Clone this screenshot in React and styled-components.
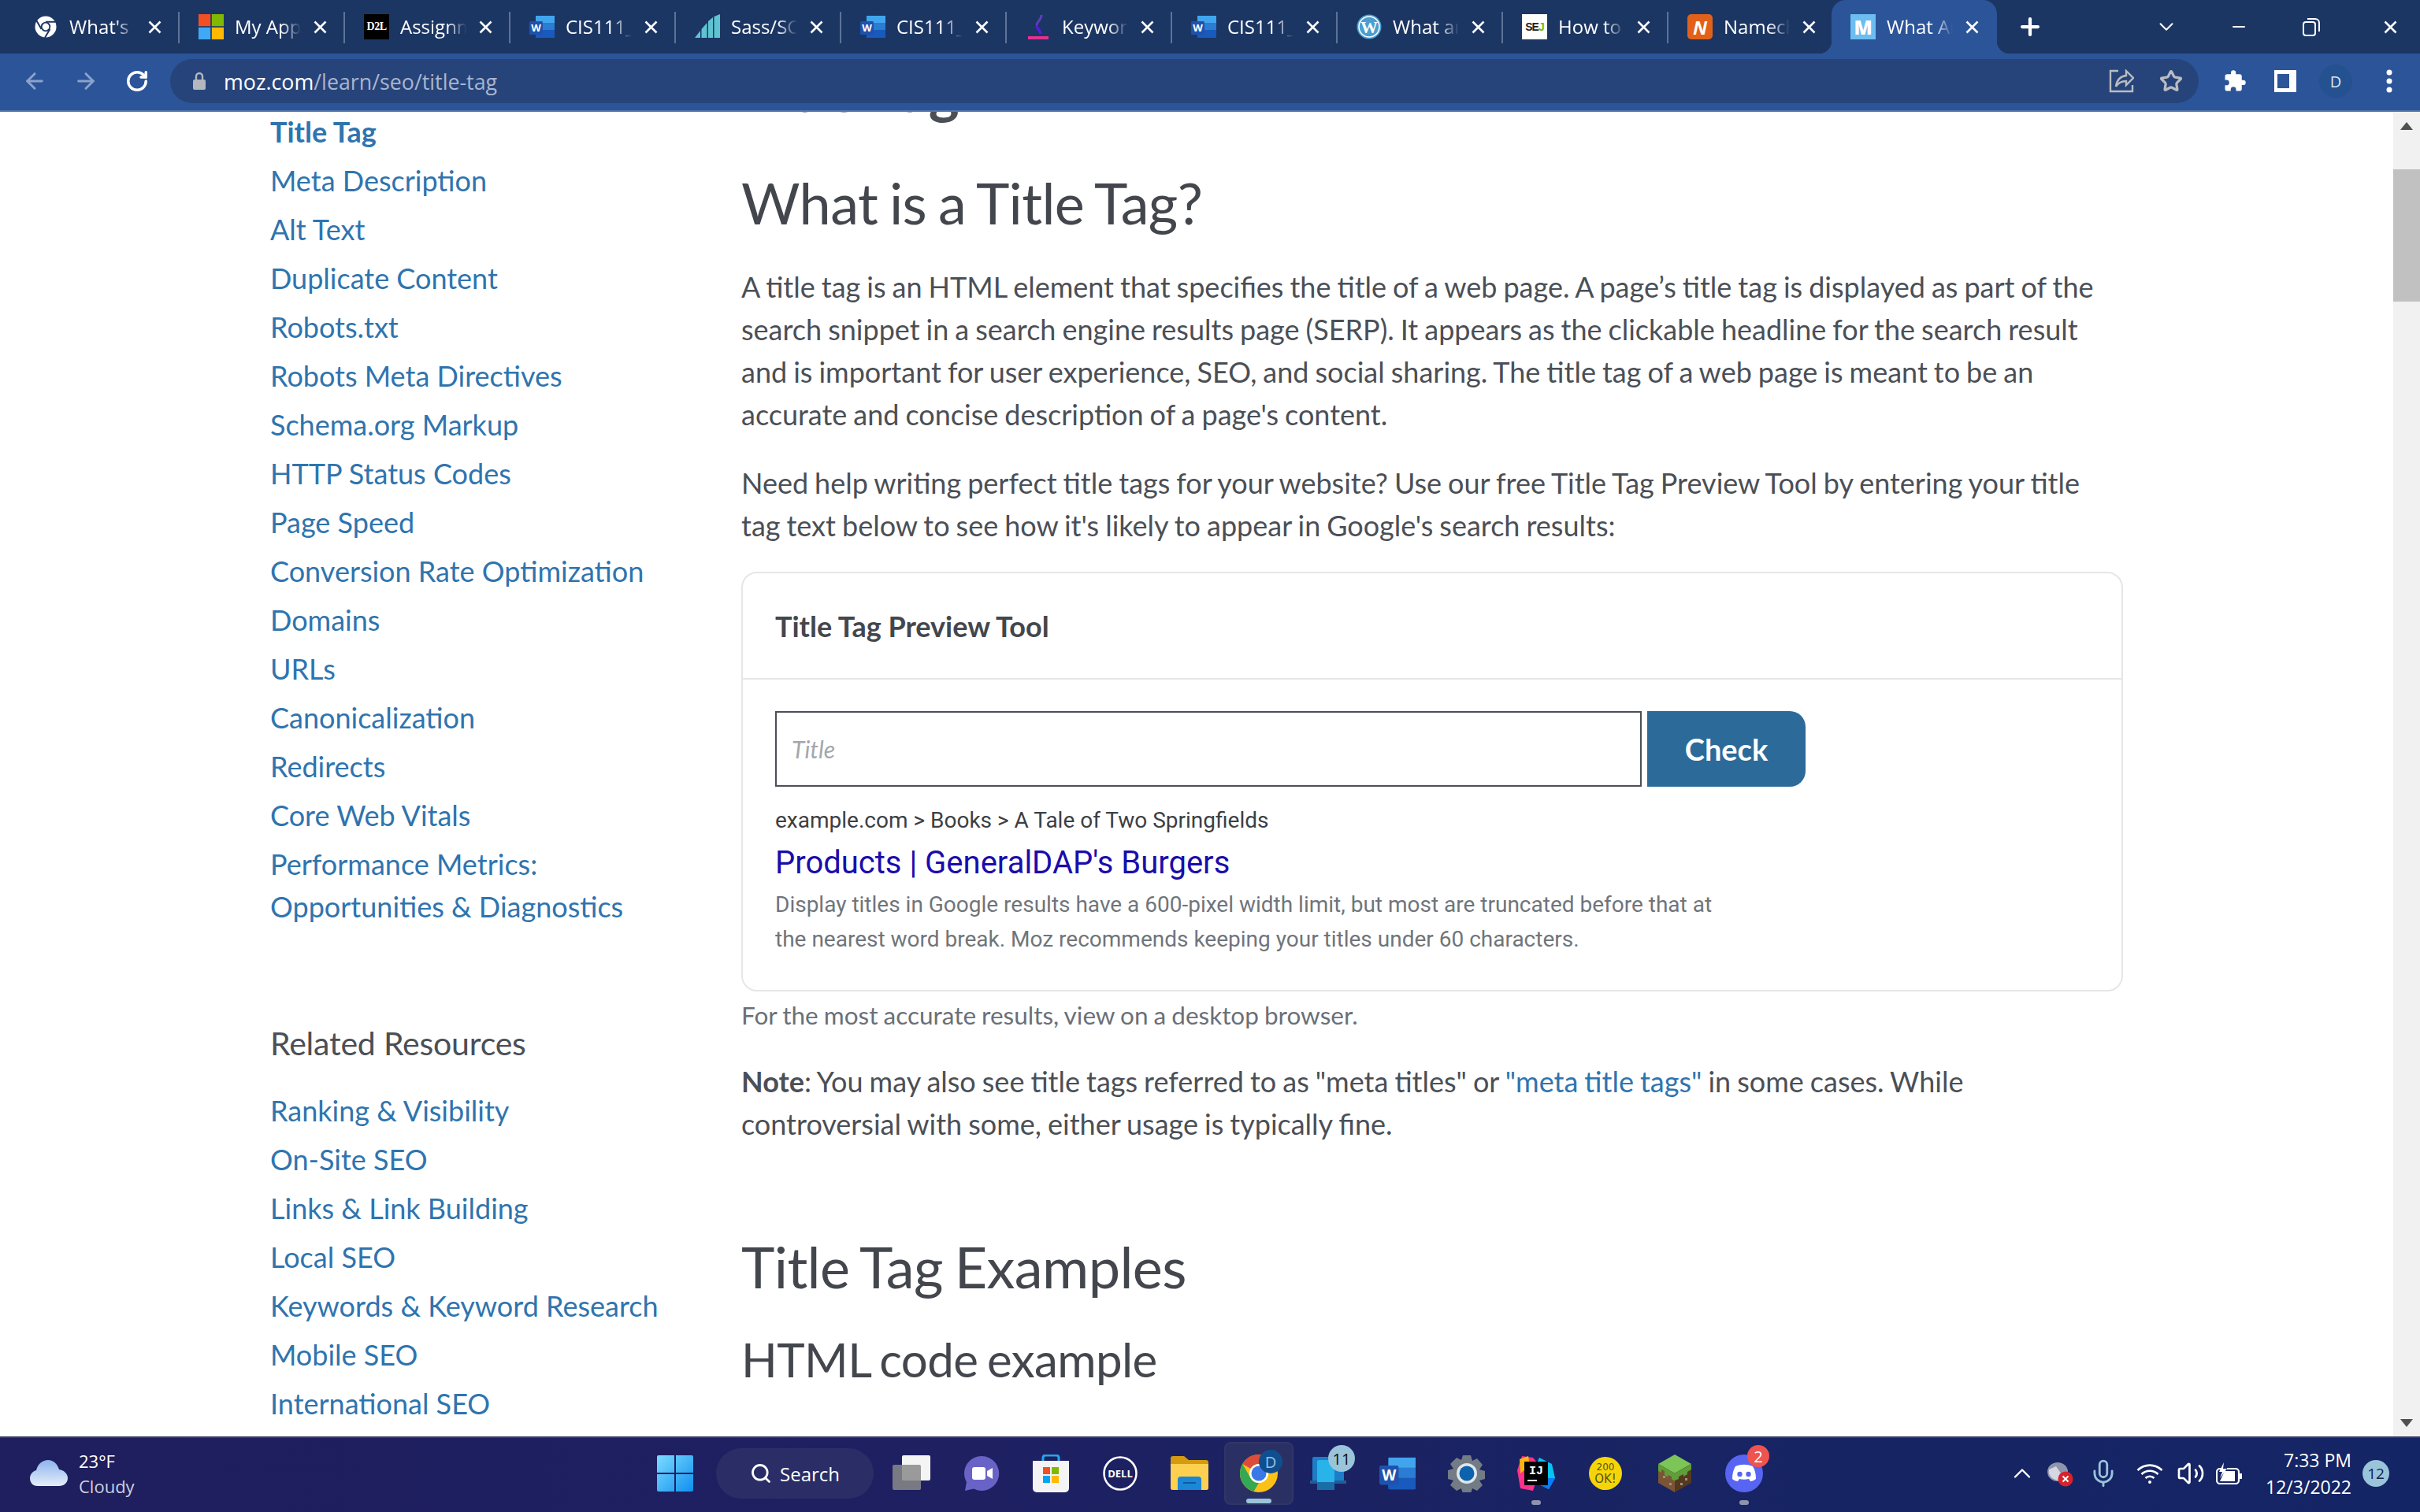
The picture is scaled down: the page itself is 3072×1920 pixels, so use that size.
import styled, { createGlobalStyle } from "styled-components";
import { ArrowLeft, ArrowRight, RotateCw, Star, Plus, ChevronDown, ChevronUp, Minus, Search, Mic, Volume2 } from "lucide-react";

const GlobalStyle = createGlobalStyle`
  html, body { margin: 0; padding: 0; background: #fff; }
  * { box-sizing: border-box; }
  body { font-family: "Lato", sans-serif; }
`;

const Page = styled.div`
  width: 3072px;
  height: 1920px;
  display: flex;
  flex-direction: column;
  overflow: hidden;
`;

/* ---------- chrome tabs ---------- */
const TabStrip = styled.div`
  height: 68px;
  flex: none;
  background: #1c3664;
  display: flex;
  padding-left: 18px;
  font-family: "Open Sans", sans-serif;
`;
const Tab = styled.div`
  position: relative;
  width: 210px;
  height: 68px;
  padding-left: 24px;
  margin-left: ${(p) => (p.$active ? "-3px" : "0")};
  display: flex;
  align-items: center;
  color: #fff;
  background: ${(p) => (p.$active ? "#2c5499" : "transparent")};
  border-radius: ${(p) => (p.$active ? "18px 18px 0 0" : "0")};
  &::after {
    content: "";
    display: ${(p) => (p.$last || p.$active ? "none" : "block")};
    position: absolute;
    right: 0;
    top: 15px;
    width: 2px;
    height: 40px;
    background: #5d7396;
  }
`;
const Flare = styled.span`
  position: absolute;
  bottom: 0;
  ${(p) => (p.$right ? "right: -16px;" : "left: -16px;")}
  width: 16px;
  height: 16px;
  background: radial-gradient(circle at ${(p) => (p.$right ? "100% 0" : "0 0")}, transparent 16px, #2c5499 16.5px);
`;
const TabIcon = styled.span`
  width: 32px;
  height: 32px;
  flex: none;
  display: flex;
  align-items: center;
  justify-content: center;
`;
const TabLabel = styled.span`
  width: 84px;
  margin-left: 14px;
  font-size: 24px;
  line-height: 32px;
  white-space: nowrap;
  overflow: hidden;
  -webkit-mask-image: linear-gradient(90deg, #000 70%, transparent 100%);
  mask-image: linear-gradient(90deg, #000 70%, transparent 100%);
`;
const CloseX = styled.svg`
  width: 17px;
  height: 17px;
  margin-left: 16px;
  flex: none;
`;
const NewTab = styled.div`
  width: 72px;
  margin-left: 6px;
  display: flex;
  align-items: center;
  justify-content: center;
  color: #fff;
`;
const WindowControls = styled.div`
  margin-left: auto;
  display: flex;
  align-items: center;
  height: 68px;
  color: #fff;
`;
const WindowButton = styled.div`
  width: 92px;
  height: 56px;
  display: flex;
  align-items: center;
  justify-content: center;
`;

/* ---------- address bar ---------- */
const Toolbar = styled.div`
  height: 74px;
  flex: none;
  background: #2c5499;
  border-bottom: 2px solid #5578aa;
  display: flex;
  align-items: center;
  padding: 0 0 2px 0;
`;
const NavButton = styled.div`
  width: 65px;
  height: 56px;
  flex: none;
  display: flex;
  align-items: center;
  justify-content: center;
  color: ${(p) => (p.$dim ? "#8ba3cb" : "#fff")};
`;
const NavGroup = styled.div`
  display: flex;
  width: 216px;
  padding-left: 11px;
  flex: none;
`;
const Omnibox = styled.div`
  width: 2575px;
  height: 56px;
  border-radius: 28px;
  background: #27447a;
  display: flex;
  align-items: center;
  padding: 0 20px 0 28px;
  flex: none;
`;
const Url = styled.div`
  margin-left: 22px;
  font-family: "Open Sans", sans-serif;
  font-size: 26.8px;
  color: #fff;
  span { color: #a9b6cf; }
`;
const OmniActions = styled.div`
  margin-left: auto;
  display: flex;
  align-items: center;
  gap: 32px;
  color: #b9bcc2;
`;
const ToolActions = styled.div`
  flex: 1;
  display: flex;
  align-items: center;
  padding-left: 31px;
  color: #fff;
`;
const Avatar = styled.div`
  width: 42px;
  height: 42px;
  margin-left: 29px;
  border-radius: 50%;
  background: #24518f;
  display: flex;
  align-items: center;
  justify-content: center;
  font: 20px "Open Sans", sans-serif;
  color: #dbe5f3;
`;
const SidePanel = styled.div`
  width: 28px;
  height: 28px;
  margin-left: 35px;
  border-style: solid;
  border-color: #fff;
  border-width: 5px 9px 5px 4px;
  background: #2c5499;
`;
const MenuGap = styled.span`
  width: 43px;
`;

/* ---------- page ---------- */
const Viewport = styled.div`
  flex: 1;
  display: flex;
  min-height: 0;
  overflow: hidden;
  background: #fff;
`;
const Sidebar = styled.nav`
  width: 941px;
  flex: none;
  padding-left: 343px;
  margin-top: -2px;
`;
const SideLink = styled.a`
  display: block;
  width: 520px;
  font-size: 36px;
  line-height: 54px;
  margin-bottom: 8px;
  color: #2f74ae;
  font-weight: ${(p) => (p.$current ? 700 : 400)};
`;
const SideHeading = styled.h3`
  margin: 119px 0 30px;
  font-size: 41px;
  line-height: 56px;
  font-weight: 400;
  letter-spacing: -0.2px;
  color: #4b4f56;
`;
const Main = styled.main`
  width: 1754px;
  flex: none;
  color: #4b4f56;
`;
const ClippedTitle = styled.h1`
  margin: -76px 0 0;
  font-size: 74px;
  line-height: 96px;
  font-weight: 700;
`;
const H2 = styled.h2`
  margin: ${(p) => p.$top}px 0 0;
  font-size: 72px;
  line-height: 86px;
  font-weight: 400;
  letter-spacing: -0.6px;
  word-spacing: -3px;
  color: #43474d;
`;
const H3 = styled.h3`
  margin: 39px 0 0;
  font-size: 60px;
  line-height: 72px;
  font-weight: 400;
  letter-spacing: -0.6px;
  word-spacing: -3px;
  color: #43474d;
`;
const Para = styled.p`
  margin: ${(p) => p.$top}px 0 0;
  font-size: 36px;
  line-height: 54px;
  word-spacing: -1.2px;
  a { color: #2f74ae; }
  b { font-weight: 700; }
`;
const Card = styled.section`
  margin-top: 32px;
  height: 533px;
  border: 2px solid #e6e6e6;
  border-radius: 20px;
`;
const CardHead = styled.div`
  height: 135px;
  padding-left: 41px;
  display: flex;
  align-items: center;
  border-bottom: 2px solid #e6e6e6;
  font-size: 36px;
  font-weight: 700;
  color: #43474d;
`;
const CardBody = styled.div`
  padding: 40px 41px 0;
`;
const InputRow = styled.div`
  display: flex;
  gap: 7px;
`;
const TitleInput = styled.div`
  width: 1100px;
  height: 96px;
  border: 2px solid #4b4f56;
  padding-left: 19px;
  display: flex;
  align-items: center;
  font-size: 30px;
  font-style: italic;
  color: #a3a7ab;
`;
const CheckButton = styled.div`
  width: 201px;
  height: 96px;
  background: #2b6a99;
  border-radius: 0 20px 20px 0;
  display: flex;
  align-items: center;
  justify-content: center;
  color: #fff;
  font-size: 38px;
  font-weight: 700;
`;
const Crumb = styled.div`
  margin-top: 21px;
  font-family: "Roboto", sans-serif;
  font-size: 28px;
  line-height: 44px;
  color: #3c4043;
`;
const PreviewTitle = styled.div`
  margin-top: 6px;
  font-family: "Roboto", sans-serif;
  font-size: 40px;
  line-height: 52px;
  color: #1a0dab;
`;
const PreviewText = styled.div`
  margin-top: 5px;
  width: 1220px;
  font-family: "Roboto", sans-serif;
  font-size: 28px;
  line-height: 44px;
  color: #70757a;
`;
const Caption = styled.div`
  margin-top: 8px;
  font-size: 31.5px;
  line-height: 44px;
  word-spacing: -1px;
  color: #6a7078;
`;

/* ---------- scrollbar ---------- */
const Scrollbar = styled.div`
  width: 34px;
  margin-left: auto;
  flex: none;
  background: #f1f1f1;
  display: flex;
  flex-direction: column;
  align-items: center;
`;
const ScrollArrow = styled.div`
  width: 0;
  height: 0;
  margin: ${(p) => (p.$down ? "auto 0 12px" : "13px 0 0")};
  border-left: 8px solid transparent;
  border-right: 8px solid transparent;
  ${(p) => (p.$down ? "border-top: 10px solid #505050;" : "border-bottom: 10px solid #505050;")}
`;
const ScrollThumb = styled.div`
  width: 100%;
  height: 168px;
  margin-top: 50px;
  background: #c1c1c1;
`;

/* ---------- taskbar ---------- */
const Taskbar = styled.div`
  height: 96px;
  flex: none;
  border-top: 2px solid #3a3a66;
  padding-bottom: 4px;
  background: linear-gradient(90deg, #1f1e5e 0%, #1e2062 40%, #182463 70%, #142566 100%);
  display: flex;
  align-items: center;
  color: #fff;
  font-family: "Open Sans", sans-serif;
`;
const Weather = styled.div`
  width: 813px;
  flex: none;
  display: flex;
  align-items: center;
  padding-left: 38px;
  gap: 14px;
`;
const WeatherText = styled.div`
  font-size: 22px;
  line-height: 32px;
  span { display: block; color: #cfd0dc; }
`;
const Cell = styled.div`
  position: relative;
  width: 88px;
  height: 80px;
  flex: none;
  display: flex;
  align-items: center;
  justify-content: center;
  border-radius: 8px;
  ${(p) => p.$on && "background: #2a3064; border: 2px solid #303668;"}
`;
const RunDot = styled.span`
  position: absolute;
  bottom: 0;
  left: 50%;
  transform: translateX(-50%);
  width: ${(p) => (p.$wide ? "32px" : "12px")};
  height: 6px;
  border-radius: 3px;
  background: ${(p) => (p.$wide ? "#9ac4da" : "#8f93ad")};
`;
const Badge = styled.span`
  position: absolute;
  display: flex;
  align-items: center;
  justify-content: center;
  top: ${(p) => p.$top}px;
  left: ${(p) => p.$left}px;
  width: ${(p) => p.$size}px;
  height: ${(p) => p.$size}px;
  border-radius: 50%;
  background: ${(p) => p.$bg};
  color: ${(p) => p.$fg};
  font-size: 20px;
`;
const SearchPill = styled.div`
  width: 200px;
  height: 64px;
  margin: 0 5px 0 8px;
  flex: none;
  border-radius: 32px;
  background: #2a2d66;
  display: flex;
  align-items: center;
  justify-content: center;
  gap: 10px;
  font-size: 24px;
`;
const Tray = styled.div`
  margin-left: auto;
  display: flex;
  align-items: center;
  padding-right: 39px;
`;
const TrayIcon = styled.div`
  width: ${(p) => p.$w}px;
  display: flex;
  justify-content: center;
  position: relative;
`;
const Clock = styled.div`
  width: 132px;
  text-align: right;
  font-size: 23px;
  line-height: 34px;
`;
const Notify = styled.div`
  width: 34px;
  height: 34px;
  margin-left: 14px;
  border-radius: 50%;
  background: #9ac4da;
  color: #10204f;
  font-size: 19px;
  display: flex;
  align-items: center;
  justify-content: center;
`;

/* ---------- drawn icons ---------- */
const X = ({ color = "#fff" }) => (
  <CloseX viewBox="0 0 17 17">
    <path d="M1.5 1.5l14 14M15.5 1.5l-14 14" stroke={color} strokeWidth="2.6" />
  </CloseX>
);
const ChromeMono = () => (
  <svg width="28" height="30" viewBox="0 0 28 28">
    <circle cx="14" cy="14" r="13.5" fill="#fff" />
    <circle cx="14" cy="14" r="6.2" fill="#1c3664" />
    <circle cx="14" cy="14" r="4.4" fill="#fff" />
    <path d="M14 7.8h12.6M19.4 17l-6.4 10.8M8.6 17L2.4 6.2" stroke="#1c3664" strokeWidth="2" />
  </svg>
);
const MsLogo = () => (
  <svg width="32" height="32" viewBox="0 0 32 32">
    <rect width="15.2" height="15.2" fill="#f25022" />
    <rect x="16.8" width="15.2" height="15.2" fill="#7fba00" />
    <rect y="16.8" width="15.2" height="15.2" fill="#40a9f5" />
    <rect x="16.8" y="16.8" width="15.2" height="15.2" fill="#ffb900" />
  </svg>
);
const D2l = styled.span`
  width: 32px;
  height: 32px;
  background: #000;
  color: #fff;
  font: 700 14px "Liberation Serif", serif;
  letter-spacing: -0.5px;
  display: flex;
  align-items: center;
  justify-content: center;
`;
const WordIcon = ({ size = 32 }) => (
  <svg width={size} height={size} viewBox="0 0 32 32">
    <rect x="8" y="2" width="24" height="28" rx="2" fill="#2b7cd3" />
    <rect x="8" y="2" width="24" height="9" fill="#41a5ee" />
    <rect x="8" y="11" width="24" height="9" fill="#2b7cd3" />
    <rect x="8" y="20" width="24" height="10" fill="#185abd" />
    <rect x="0" y="9" width="17" height="17" rx="1.5" fill="#1f52ad" />
    <text x="8.5" y="22" textAnchor="middle" fontSize="13" fontWeight="700" fill="#fff" fontFamily="Open Sans">W</text>
  </svg>
);
const SassBars = () => (
  <svg width="32" height="32" viewBox="0 0 32 32">
    <path d="M0 30l7-9v9zM8.5 30V19l7-8v19zM17 30V9l6-5v26zM24.500 30V3L32 0v30z" fill="#5fc3d2" />
  </svg>
);
const KeywordIcon = () => (
  <svg width="28" height="32" viewBox="0 0 28 32">
    <path d="M18 1c0 7-6 8-6 13" stroke="#5b3fb8" strokeWidth="3" fill="none" />
    <path d="M12 14c0 5 4 5 5 11" stroke="#5a18e6" strokeWidth="3.500" fill="none" />
    <rect x="1" y="28" width="26" height="5" fill="#e0338f" />
  </svg>
);
const WpIcon = () => (
  <svg width="32" height="32" viewBox="0 0 32 32">
    <circle cx="16" cy="16" r="15.500" fill="#4a9fd0" />
    <circle cx="16" cy="16" r="13" fill="none" stroke="#fff" strokeWidth="1.500" />
    <text x="16" y="24" textAnchor="middle" fontSize="22" fontWeight="700" fill="#fff" fontFamily="Liberation Serif">W</text>
  </svg>
);
const Sej = styled.span`
  width: 32px;
  height: 32px;
  background: #fff;
  color: #222;
  font: 700 14px "Liberation Sans", sans-serif;
  letter-spacing: -1px;
  display: flex;
  align-items: center;
  justify-content: center;
  i { font-style: normal; color: #7ab800; }
`;
const Namecheap = styled.span`
  width: 32px;
  height: 32px;
  border-radius: 5px;
  background: #e2611a;
  color: #fff;
  font: italic 700 24px "Open Sans", sans-serif;
  display: flex;
  align-items: center;
  justify-content: center;
`;
const MozIcon = styled.span`
  width: 32px;
  height: 32px;
  background: #6cbdf0;
  color: #fff;
  font: 800 24px "Open Sans", sans-serif;
  display: flex;
  align-items: center;
  justify-content: center;
`;
const LockIcon = () => (
  <svg width="18" height="24" viewBox="0 0 18 24">
    <path d="M5 10V6a4 4 0 018 0v4" fill="none" stroke="#b4b7bd" strokeWidth="2.400" />
    <rect x="1" y="10" width="16" height="13" rx="2" fill="#b4b7bd" />
  </svg>
);
const ShareIcon = () => (
  <svg width="32" height="30" viewBox="0 0 32 30" fill="none" stroke="currentColor" strokeWidth="2.400">
    <path d="M12 2H2v26h28v-8" />
    <path d="M22 2l9 9-9 9v-5c-6 0-10 2-13 7 1-8 5-13 13-14z" />
  </svg>
);
const PuzzleSolid = () => (
  <svg width="30" height="30" viewBox="0 0 24 24" fill="#fff">
    <path d="M20.500 11H19V7a2 2 0 00-2-2h-4V3.500a2.500 2.500 0 00-5 0V5H4a2 2 0 00-2 2v3.800h1.500a2.700 2.700 0 010 5.400H2V20a2 2 0 002 2h3.800v-1.500a2.700 2.700 0 015.400 0V22H17a2 2 0 002-2v-4h1.500a2.500 2.500 0 000-5z" />
  </svg>
);
const RestoreIcon = () => (
  <svg width="22" height="24" viewBox="0 0 22 24" fill="none" stroke="#fff" strokeWidth="2">
    <rect x="1" y="6" width="15" height="17" rx="3" />
    <path d="M6 2h10a5 5 0 015 5v11" />
  </svg>
);
const DotsIcon = () => (
  <svg width="8" height="30" viewBox="0 0 8 30" fill="#fff">
    <circle cx="4" cy="4" r="3.500" />
    <circle cx="4" cy="15" r="3.500" />
    <circle cx="4" cy="26" r="3.500" />
  </svg>
);
const CloudIcon = () => (
  <svg width="48" height="34" viewBox="0 0 48 34">
    <defs>
      <linearGradient id="cl" x1="0" y1="0" x2="0" y2="1">
        <stop offset="0" stopColor="#8eb4ec" />
        <stop offset="1" stopColor="#e4eefa" />
      </linearGradient>
    </defs>
    <path d="M10 33C3 33 0 28 0 23c0-5 4-9 8-10C10 5 16 0 23 0c7 0 12 5 14 12 6 1 11 5 11 11 0 6-5 10-11 10z" fill="url(#cl)" />
  </svg>
);
const StartIcon = () => (
  <svg width="46" height="46" viewBox="0 0 46 46">
    <defs>
      <linearGradient id="st" x1="0" y1="0" x2="1" y2="1">
        <stop offset="0" stopColor="#7cdcff" />
        <stop offset="1" stopColor="#0f8fef" />
      </linearGradient>
    </defs>
    <path d="M0 2a2 2 0 012-2h20v22H0zM24 0h20a2 2 0 012 2v20H24zM0 24h22v22H2a2 2 0 01-2-2zM24 24h22v20a2 2 0 01-2 2H24z" fill="url(#st)" />
  </svg>
);
const TaskView = () => (
  <svg width="50" height="46" viewBox="0 0 50 46">
    <rect x="12" y="0" width="36" height="32" rx="2" fill="#f4f4f4" />
    <rect x="0" y="12" width="36" height="32" rx="2" fill="#8a8a8a" fillOpacity=".85" />
  </svg>
);
const TeamsIcon = () => (
  <svg width="46" height="46" viewBox="0 0 46 46">
    <path d="M23 1a22 22 0 11-10 41.500L2 45l2-11A22 22 0 0123 1z" fill="#6a63c7" />
    <rect x="11" y="15" width="17" height="16" rx="3" fill="#fff" />
    <path d="M30 20l7-4v14l-7-4z" fill="#fff" />
  </svg>
);
const StoreIcon = () => (
  <svg width="46" height="48" viewBox="0 0 46 48">
    <path d="M13 8V4a3 3 0 013-3h14a3 3 0 013 3v4" fill="none" stroke="#27a5e8" strokeWidth="3" />
    <path d="M0 8h46v35a5 5 0 01-5 5H5a5 5 0 01-5-5z" fill="#f4f4f4" />
    <rect x="13" y="16" width="9" height="9" fill="#f25022" />
    <rect x="24" y="16" width="9" height="9" fill="#7fba00" />
    <rect x="13" y="27" width="9" height="9" fill="#00a4ef" />
    <rect x="24" y="27" width="9" height="9" fill="#ffb900" />
  </svg>
);
const DellIcon = () => (
  <svg width="44" height="44" viewBox="0 0 44 44">
    <circle cx="22" cy="22" r="20.500" fill="none" stroke="#fff" strokeWidth="2.500" />
    <text x="22" y="27" textAnchor="middle" fontSize="13" fontWeight="700" fill="#fff" fontFamily="Open Sans">DELL</text>
  </svg>
);
const FolderIcon = () => (
  <svg width="48" height="44" viewBox="0 0 48 44">
    <path d="M0 3a3 3 0 013-3h14l6 5h22a3 3 0 013 3v32a3 3 0 01-3 3H3a3 3 0 01-3-3z" fill="#d49a10" />
    <path d="M0 10h48v30a3 3 0 01-3 3H3a3 3 0 01-3-3z" fill="#fdd04f" />
    <path d="M9 30a4 4 0 014-4h22a4 4 0 014 4v13H9z" fill="#1b87d6" />
    <rect x="16" y="33" width="16" height="2" fill="#0d5c9e" />
  </svg>
);
const ChromeIcon = () => (
  <svg width="48" height="48" viewBox="0 0 48 48">
    <circle cx="24" cy="24" r="24" fill="#fbc116" />
    <path d="M24 0a24 24 0 0120.800 12H24a12 12 0 00-10.400 6L3.200 12A24 24 0 0124 0z" fill="#dd4b3a" />
    <path d="M3.200 12l10.400 18a12 12 0 0010.400 6L17.500 47A24 24 0 013.200 12z" fill="#35a853" />
    <circle cx="24" cy="24" r="12" fill="#fff" />
    <circle cx="24" cy="24" r="9.500" fill="#3b78e7" />
  </svg>
);
const PhoneIcon = () => (
  <svg width="46" height="42" viewBox="0 0 46 42">
    <rect x="3" y="0" width="40" height="32" rx="2" fill="#1c7ec9" />
    <rect x="0" y="30" width="46" height="4" fill="#1e5f96" />
    <rect x="9" y="4" width="22" height="38" rx="2" fill="#28b4e8" />
    <rect x="9" y="32" width="22" height="10" fill="#1a6ea8" />
  </svg>
);
const SettingsIcon = () => (
  <svg width="48" height="48" viewBox="0 0 48 48">
    <path d="M19 1h10l2 7 6-3 7 8-4 6 7 2v10l-7 2 4 6-7 7-6-3-2 7H19l-2-7-6 3-8-7 4-6-7-2V20l7-2-4-6 8-8 6 3z" fill="#737c85" />
    <circle cx="24" cy="24" r="13" fill="#dfe6ea" />
    <circle cx="24" cy="24" r="9.500" fill="#0c62ad" />
  </svg>
);
const IdeaIcon = () => (
  <svg width="48" height="48" viewBox="0 0 48 48">
    <path d="M6 2l14 2 10 12-10 30-16-3L0 20z" fill="#ff318c" />
    <path d="M3 6l11-4 2 12-12 10z" fill="#fdb60d" />
    <path d="M28 4l16 8 4 18-8 14-12-6-6-20z" fill="#07c3f2" />
    <path d="M32 30l16 0-8 14-12-6z" fill="#087cfa" />
    <rect x="9" y="9" width="30" height="30" fill="#000" />
    <text x="24" y="25" textAnchor="middle" fontSize="15" fontWeight="700" fill="#fff" fontFamily="Liberation Mono">IJ</text>
    <rect x="13" y="32" width="12" height="2" fill="#fff" />
  </svg>
);
const OkBadge = styled.span`
  width: 42px;
  height: 42px;
  border-radius: 50%;
  background: #f5d50a;
  color: #5b5410;
  font: 12px/14px "DejaVu Sans", sans-serif;
  text-align: center;
  padding-top: 6px;
  span { display: block; font-size: 15px; line-height: 17px; }
`;
const MinecraftIcon = () => (
  <svg width="42" height="48" viewBox="0 0 42 48">
    <path d="M21 0l21 12-21 12L0 12z" fill="#7cc556" />
    <path d="M0 12l21 12v24L0 36z" fill="#7a5434" />
    <path d="M42 12L21 24v24l21-12z" fill="#54381f" />
    <path d="M0 12l21 12v10l-4-3v-3l-5-2v3l-4-3v-5l-4-2v4l-4-2zM42 12L21 24v9l5-2v-3l6-3v3l5-3v-3l5-3z" fill="#5f9e3a" />
    <path d="M6 27h3v3H6zM14 36h3v3h-3zM28 36h3v3h-3zM34 30h3v3h-3z" fill="#9a8f86" />
  </svg>
);
const DiscordIcon = () => (
  <svg width="48" height="48" viewBox="0 0 48 48">
    <circle cx="24" cy="24" r="24" fill="#5865f2" />
    <path d="M13 15c7-3 15-3 22 0 3 5 4 10 4 16-2 2-5 3-7 3l-2-3c-4 1-8 1-12 0l-2 3c-2 0-5-1-7-3 0-6 1-11 4-16z" fill="#fff" />
    <circle cx="18.500" cy="25" r="3.200" fill="#5865f2" />
    <circle cx="29.500" cy="25" r="3.200" fill="#5865f2" />
  </svg>
);
const OneDriveOff = () => (
  <svg width="34" height="34" viewBox="0 0 34 34">
    <ellipse cx="14" cy="15" rx="13" ry="12" fill="#8e95ad" />
    <path d="M3 12a13 12 0 0020 12L12 8z" fill="#d5d8e2" />
    <circle cx="24" cy="24" r="9.500" fill="#d8232a" />
    <path d="M20.500 20.500l7 7M27.500 20.500l-7 7" stroke="#fff" strokeWidth="2" />
  </svg>
);
const WifiIcon = () => (
  <svg width="34" height="28" viewBox="0 0 34 28" fill="none" stroke="#fff" strokeWidth="2.600">
    <path d="M1.500 10a22 22 0 0131 0M6.500 15a15 15 0 0121 0M11.500 20a8 8 0 0111 0" />
    <circle cx="17" cy="25" r="2" fill="#fff" stroke="none" />
  </svg>
);
const BatteryIcon = () => (
  <svg width="33" height="28" viewBox="0 0 33 28" fill="none">
    <path d="M8 8H5a4 4 0 00-4 4v11a4 4 0 004 4h20a4 4 0 004-4V12a4 4 0 00-4-4H14" stroke="#fff" strokeWidth="2.200" />
    <path d="M29.500 14H33v7h-3.500z" fill="#fff" />
    <path d="M10 0L4 12h4l-3 8 9-12H9z" fill="#fff" />
    <path d="M11 11h13v13H5z" fill="#fff" />
  </svg>
);

const tabs = [
  { icon: <ChromeMono />, label: "What's New" },
  { icon: <MsLogo />, label: "My Apps" },
  { icon: <D2l>D2L</D2l>, label: "Assignments" },
  { icon: <WordIcon />, label: "CIS111_" },
  { icon: <SassBars />, label: "Sass/SCSS" },
  { icon: <WordIcon />, label: "CIS111_" },
  { icon: <KeywordIcon />, label: "Keywords" },
  { icon: <WordIcon />, label: "CIS111_" },
  { icon: <WpIcon />, label: "What are" },
  { icon: <Sej>SE<i>J</i></Sej>, label: "How to" },
  { icon: <Namecheap>N</Namecheap>, label: "Namecheap", last: true },
  { icon: <MozIcon>M</MozIcon>, label: "What Are", active: true },
];

const seoLinks = ["Meta Description", "Alt Text", "Duplicate Content", "Robots.txt", "Robots Meta Directives", "Schema.org Markup", "HTTP Status Codes", "Page Speed", "Conversion Rate Optimization", "Domains", "URLs", "Canonicalization", "Redirects", "Core Web Vitals"];
const relatedLinks = ["Ranking & Visibility", "On-Site SEO", "Links & Link Building", "Local SEO", "Keywords & Keyword Research", "Mobile SEO", "International SEO"];

export default function App() {
  return (
    <Page>
      <GlobalStyle />
      <TabStrip>
        {tabs.map((t, i) => (
          <Tab key={i} $active={t.active} $last={t.last}>
            {t.active && <Flare />}
            {t.active && <Flare $right />}
            <TabIcon>{t.icon}</TabIcon>
            <TabLabel>{t.label}</TabLabel>
            <X />
          </Tab>
        ))}
        <NewTab><Plus size={34} strokeWidth={3} /></NewTab>
        <WindowControls>
          <WindowButton><ChevronDown size={30} strokeWidth={1.6} /></WindowButton>
          <WindowButton><Minus size={24} strokeWidth={2} /></WindowButton>
          <WindowButton><RestoreIcon /></WindowButton>
          <WindowButton><X /></WindowButton>
        </WindowControls>
      </TabStrip>

      <Toolbar>
        <NavGroup>
          <NavButton $dim><ArrowLeft size={32} strokeWidth={2.2} /></NavButton>
          <NavButton $dim><ArrowRight size={32} strokeWidth={2.2} /></NavButton>
          <NavButton><RotateCw size={30} strokeWidth={2.8} /></NavButton>
        </NavGroup>
        <Omnibox>
          <LockIcon />
          <Url>moz.com<span>/learn/seo/title-tag</span></Url>
          <OmniActions>
            <ShareIcon />
            <Star size={30} strokeWidth={2.6} />
          </OmniActions>
        </Omnibox>
        <ToolActions>
          <PuzzleSolid />
          <SidePanel />
          <Avatar>D</Avatar>
          <MenuGap />
          <DotsIcon />
        </ToolActions>
      </Toolbar>

      <Viewport>
        <Sidebar>
          <SideLink $current>Title Tag</SideLink>
          {seoLinks.map((l) => <SideLink key={l}>{l}</SideLink>)}
          <SideLink>Performance Metrics:<br />Opportunities &amp; Diagnostics</SideLink>
          <SideHeading>Related Resources</SideHeading>
          {relatedLinks.map((l) => <SideLink key={l}>{l}</SideLink>)}
        </Sidebar>
        <Main>
          <ClippedTitle>Title Tag</ClippedTitle>
          <H2 $top={52}>What is a Title Tag?</H2>
          <Para $top={37}>A title tag is an HTML element that specifies the title of a web page. A page’s title tag is displayed as part of the search snippet in a search engine results page (SERP). It appears as the clickable headline for the search result and is important for user experience, SEO, and social sharing. The title tag of a web page is meant to be an accurate and concise description of a page's content.</Para>
          <Para $top={33}>Need help writing perfect title tags for your website? Use our free Title Tag Preview Tool by entering your title tag text below to see how it's likely to appear in Google's search results:</Para>
          <Card>
            <CardHead>Title Tag Preview Tool</CardHead>
            <CardBody>
              <InputRow>
                <TitleInput>Title</TitleInput>
                <CheckButton>Check</CheckButton>
              </InputRow>
              <Crumb>example.com &gt; Books &gt; A Tale of Two Springfields</Crumb>
              <PreviewTitle>Products | GeneralDAP's Burgers</PreviewTitle>
              <PreviewText>Display titles in Google results have a 600-pixel width limit, but most are truncated before that at the nearest word break. Moz recommends keeping your titles under 60 characters.</PreviewText>
            </CardBody>
          </Card>
          <Caption>For the most accurate results, view on a desktop browser.</Caption>
          <Para $top={35}><b>Note</b>: You may also see title tags referred to as "meta titles" or <a>"meta title tags"</a> in some cases. While controversial with some, either usage is typically fine.</Para>
          <H2 $top={111}>Title Tag Examples</H2>
          <H3>HTML code example</H3>
        </Main>
        <Scrollbar>
          <ScrollArrow />
          <ScrollThumb />
          <ScrollArrow $down />
        </Scrollbar>
      </Viewport>

      <Taskbar>
        <Weather>
          <CloudIcon />
          <WeatherText>23°F<span>Cloudy</span></WeatherText>
        </Weather>
        <Cell><StartIcon /></Cell>
        <SearchPill><Search size={28} strokeWidth={2.4} />Search</SearchPill>
        <Cell><TaskView /></Cell>
        <Cell><TeamsIcon /></Cell>
        <Cell><StoreIcon /></Cell>
        <Cell><DellIcon /></Cell>
        <Cell><FolderIcon /></Cell>
        <Cell $on>
          <ChromeIcon />
          <Badge $top={8} $left={42} $size={30} $bg="#0f4f8f" $fg="#9fc0de">D</Badge>
          <RunDot $wide />
        </Cell>
        <Cell>
          <PhoneIcon />
          <Badge $top={4} $left={44} $size={34} $bg="#9ac4da" $fg="#111">11</Badge>
        </Cell>
        <Cell><WordIcon size={46} /></Cell>
        <Cell><SettingsIcon /></Cell>
        <Cell><IdeaIcon /><RunDot /></Cell>
        <Cell><OkBadge>200<span>OK!</span></OkBadge></Cell>
        <Cell><MinecraftIcon /></Cell>
        <Cell>
          <DiscordIcon />
          <Badge $top={4} $left={48} $size={28} $bg="#ef5350" $fg="#fff">2</Badge>
          <RunDot />
        </Cell>
        <Tray>
          <TrayIcon $w={48}><ChevronUp size={36} strokeWidth={1.6} /></TrayIcon>
          <TrayIcon $w={48}><OneDriveOff /></TrayIcon>
          <TrayIcon $w={62}><Mic size={38} strokeWidth={1.8} color="#9ac4da" /></TrayIcon>
          <TrayIcon $w={56}><WifiIcon /></TrayIcon>
          <TrayIcon $w={48}><Volume2 size={36} strokeWidth={1.8} /></TrayIcon>
          <TrayIcon $w={48}><BatteryIcon /></TrayIcon>
          <Clock>7:33 PM<br />12/3/2022</Clock>
          <Notify>12</Notify>
        </Tray>
      </Taskbar>
    </Page>
  );
}
